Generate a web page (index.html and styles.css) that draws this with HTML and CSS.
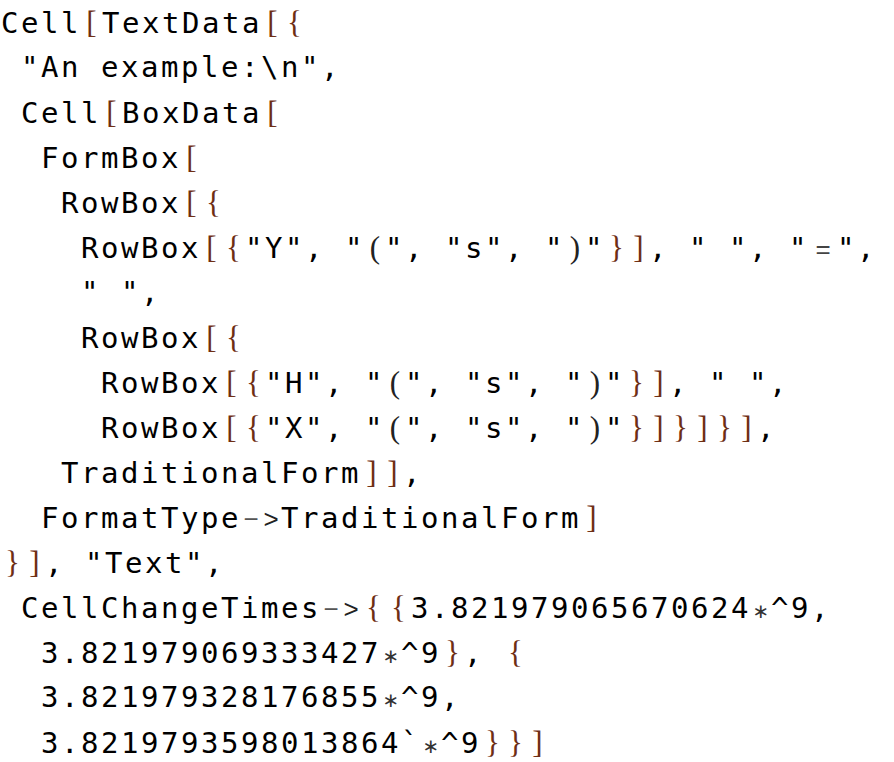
FILE: index.html
```html
<!DOCTYPE html>
<html>
<head>
<meta charset="utf-8">
<link rel="stylesheet" href="styles.css">
</head>
<body>
<div class="code">
<div class="l">Cell<span class="b">[</span>TextData<span class="b">[</span><span class="b c">{</span></div>
<div class="l"> "An example:\n",</div>
<div class="l"> Cell<span class="b">[</span>BoxData<span class="b">[</span></div>
<div class="l">  FormBox<span class="b">[</span></div>
<div class="l">   RowBox<span class="b">[</span><span class="b c">{</span></div>
<div class="l">    RowBox<span class="b">[</span><span class="b c">{</span>"Y", "<span class="t">(</span>", "s", "<span class="t">)</span>"<span class="b c">}</span><span class="b">]</span>, " ", "<span class="t eq">=</span>",</div>
<div class="l">    " ",</div>
<div class="l">    RowBox<span class="b">[</span><span class="b c">{</span></div>
<div class="l">     RowBox<span class="b">[</span><span class="b c">{</span>"H", "<span class="t">(</span>", "s", "<span class="t">)</span>"<span class="b c">}</span><span class="b">]</span>, " ",</div>
<div class="l">     RowBox<span class="b">[</span><span class="b c">{</span>"X", "<span class="t">(</span>", "s", "<span class="t">)</span>"<span class="b c">}</span><span class="b">]</span><span class="b c">}</span><span class="b">]</span><span class="b c">}</span><span class="b">]</span>,</div>
<div class="l">   TraditionalForm<span class="b">]</span><span class="b">]</span>,</div>
<div class="l">  FormatType<span class="o">−</span><span class="o gt">&gt;</span>TraditionalForm<span class="b">]</span></div>
<div class="l"><span class="b c">}</span><span class="b">]</span>, "Text",</div>
<div class="l"> CellChangeTimes<span class="o">−</span><span class="o gt">&gt;</span><span class="b wide">{</span><span class="b wide">{</span>3.821979065670624<span class="s">∗</span>^9,</div>
<div class="l">  3.821979069333427<span class="s">∗</span>^9<span class="b c">}</span>, <span class="b c">{</span></div>
<div class="l">  3.821979328176855<span class="s">∗</span>^9,</div>
<div class="l">  3.8219793598013864`<span class="s">∗</span>^9<span class="b c">}</span><span class="b c">}</span><span class="b">]</span></div>
</div>
</body>
</html>
```

FILE: styles.css
```css
html, body {
  margin: 0;
  padding: 0;
  background: #ffffff;
}

.code {
  font-family: "DejaVu Sans Mono", monospace;
  font-size: 29px;
  letter-spacing: 2.54px;
  line-height: 45px;
  color: #000000;
  padding-left: 1px;
}

.l {
  white-space: pre;
  height: 45px;
}

.b, .o, .t, .s {
  display: inline-block;
  width: 20px;
  text-align: center;
  letter-spacing: 0;
}

.b {
  font-family: "Liberation Serif", serif;
  font-size: 31px;
  color: #6e2e14;
  width: 21px;
}

.b.c {
  width: 23px;
}

.b.wide {
  width: 25px;
}

.t {
  font-family: "Liberation Serif", serif;
  font-size: 31px;
  color: #222222;
}

.t.eq {
  font-family: "Liberation Sans", sans-serif;
  font-size: 26px;
  color: #444444;
  width: 28px;
}

.o {
  font-family: "Liberation Sans", sans-serif;
  font-size: 26px;
  color: #555555;
}

.o.gt {
  color: #222222;
}

.s {
  font-family: "DejaVu Sans", sans-serif;
  font-size: 20px;
  color: #333333;
}
```
